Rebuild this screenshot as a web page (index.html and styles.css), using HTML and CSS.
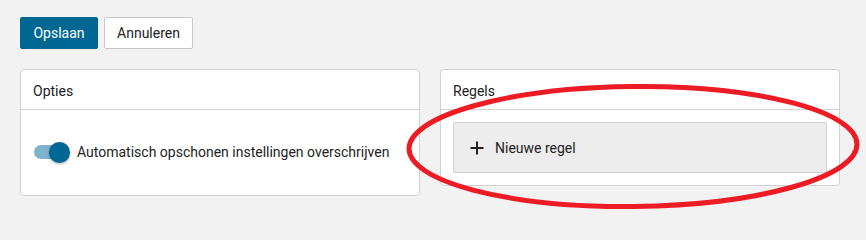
FILE: index.html
```
<!DOCTYPE html>
<html lang="nl">
<head>
<meta charset="utf-8">
<title>Opties</title>
<link rel="stylesheet" href="styles.css">
</head>
<body>
<div class="page">
  <div class="actions">
    <button class="btn btn-primary">Opslaan</button>
    <button class="btn btn-default">Annuleren</button>
  </div>
  <div class="cards">
    <section class="card">
      <header class="card-header">Opties</header>
      <div class="card-body options-body">
        <label class="switch-row">
          <span class="switch"><span class="track"></span><span class="knob"></span></span>
          <span>Automatisch opschonen instellingen overschrijven</span>
        </label>
      </div>
    </section>
    <section class="card">
      <header class="card-header">Regels</header>
      <div class="card-body rules-body">
        <button class="new-rule">
          <svg class="plus" width="14" height="14" viewBox="0 0 14 14"><path d="M7 0.5V13.5M0.5 7H13.5" stroke="#222" stroke-width="2" fill="none"/></svg>
          <span>Nieuwe regel</span>
        </button>
      </div>
    </section>
  </div>
</div>
<svg class="annotation" width="866" height="239" viewBox="0 0 866 239">
  <ellipse cx="633" cy="146.5" rx="224" ry="60" fill="none" stroke="#ed1c24" stroke-width="5" transform="rotate(-0.6 633 146.5)"/>
</svg>
</body>
</html>
```
FILE: styles.css
```
* { box-sizing: border-box; }
html, body { margin: 0; padding: 0; }
body {
  background: #f2f2f2;
  font-family: Roboto, "Noto Sans", Arial, sans-serif;
  font-size: 14px;
  color: #222;
  width: 866px;
  height: 239px;
  position: relative;
  overflow: hidden;
}
.page { padding: 17px 20px; }
.actions { display: flex; gap: 6px; }
.btn {
  height: 32px;
  font-family: inherit;
  font-size: 14px;
  border-radius: 2px;
  padding: 0 12px;
  cursor: pointer;
}
.btn-primary { background: #006794; color: #fff; border: 1px solid #006794; width: 78px; }
.btn-default { background: #fff; color: #222; border: 1px solid #c8c8c8; width: 89px; }
.cards { display: flex; gap: 20px; margin-top: 20px; align-items: flex-start; }
.card {
  width: 400px;
  background: #fff;
  border: 1px solid #d2d2d2;
  border-radius: 4px;
}
.card-header {
  height: 40px;
  padding: 13px 12px 0;
  border-bottom: 1px solid #d2d2d2;
  line-height: 16px;
}
.options-body { padding: 32px 13px 33px; }
.switch-row { display: flex; align-items: center; gap: 7px; height: 20px; }
.switch { position: relative; width: 36px; height: 20px; flex: none; }
.track {
  position: absolute; left: 0; top: 3px; width: 30px; height: 14px;
  border-radius: 7px; background: #7fb3cb;
}
.knob {
  position: absolute; left: 15px; top: 0; width: 21px; height: 21px;
  border-radius: 50%; background: #006794;
  box-shadow: 0 1px 3px rgba(0,0,0,0.35);
}
.rules-body { padding: 12px 12px 12px; }
.new-rule {
  width: 374px;
  height: 51px;
  display: flex;
  align-items: center;
  gap: 11px;
  padding: 0 16px;
  background: #ededed;
  border: 1px solid #d0d0d0;
  border-radius: 2px;
  font-family: inherit;
  font-size: 14px;
  color: #222;
  cursor: pointer;
}
.plus { flex: none; }
.annotation { position: absolute; left: 0; top: 0; pointer-events: none; }
```
